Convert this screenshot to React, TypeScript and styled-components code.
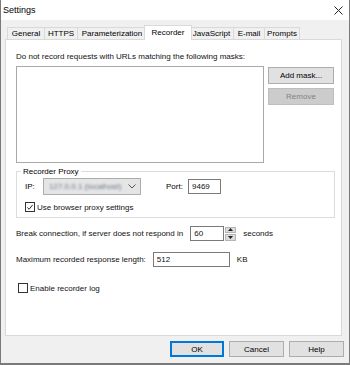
import React from 'react';
import styled, { createGlobalStyle } from 'styled-components';

const GlobalStyle = createGlobalStyle`
  html, body { margin: 0; padding: 0; background: #ffffff; }
  body {
    font-family: "Liberation Sans", Arial, sans-serif;
    font-size: 8px;
    color: #111;
  }
  * { box-sizing: border-box; }
`;

const tabs = [
    { label: 'General', width: 38 },
    { label: 'HTTPS', width: 34 },
    { label: 'Parameterization', width: 70 },
    { label: 'Recorder', width: 44, active: true },
    { label: 'JavaScript', width: 45 },
    { label: 'E-mail', width: 32 },
    { label: 'Prompts', width: 36 },
];

export default function App() {
    return (
        <>
            <GlobalStyle />
            <Window>
                <TitleBar>
                    <Title>Settings</Title>
                    <CloseIcon width="9" height="9" viewBox="0 0 9 9">
                        <path d="M0.5 0.5 L8.5 8.5 M8.5 0.5 L0.5 8.5" stroke="#222" strokeWidth="1" />
                    </CloseIcon>
                </TitleBar>
                <Body>
                    <TabStrip>
                        {tabs.map((t) => (
                            <Tab key={t.label} $width={t.width} $active={!!t.active}>
                                {t.label}
                            </Tab>
                        ))}
                    </TabStrip>
                    <Panel>
                        <Caption>Do not record requests with URLs matching the following masks:</Caption>
                        <ListRow>
                            <MaskList />
                            <SideButtons>
                                <PushButton $width={66}>Add mask...</PushButton>
                                <PushButton $width={66} disabled>Remove</PushButton>
                            </SideButtons>
                        </ListRow>

                        <ProxyGroup>
                            <Legend>Recorder Proxy</Legend>
                            <ProxyRow>
                                <FieldLabel $width={18}>IP:</FieldLabel>
                                <Combo>
                                    <BlurredValue>127.0.0.1 (localhost)</BlurredValue>
                                    <svg width="8" height="5" viewBox="0 0 8 5">
                                        <path d="M0.5 0.5 L4 4 L7.5 0.5" stroke="#555" strokeWidth="1" fill="none" />
                                    </svg>
                                </Combo>
                                <FieldLabel $width={22} $gap={25}>Port:</FieldLabel>
                                <TextInput $width={33} $height={15}>9469</TextInput>
                            </ProxyRow>
                            <CheckRow>
                                <CheckBox>
                                    <svg width="9" height="9" viewBox="0 0 9 9">
                                        <path d="M1.5 4.5 L3.5 6.5 L7.5 1.5" stroke="#222" strokeWidth="1.1" fill="none" />
                                    </svg>
                                </CheckBox>
                                <span>Use browser proxy settings</span>
                            </CheckRow>
                        </ProxyGroup>

                        <FormRow $top={8}>
                            <span>Break connection, if server does not respond in</span>
                            <SpinGroup>
                                <TextInput $width={34} $height={15}>60</TextInput>
                                <Spinner>
                                    <SpinHalf>
                                        <svg width="5" height="3" viewBox="0 0 5 3"><path d="M0 3 L2.5 0 L5 3 Z" fill="#222" /></svg>
                                    </SpinHalf>
                                    <SpinHalf>
                                        <svg width="5" height="3" viewBox="0 0 5 3"><path d="M0 0 L2.5 3 L5 0 Z" fill="#222" /></svg>
                                    </SpinHalf>
                                </Spinner>
                            </SpinGroup>
                            <span>seconds</span>
                        </FormRow>

                        <FormRow $top={11}>
                            <span>Maximum recorded response length:</span>
                            <TextInput $width={77} $height={15}>512</TextInput>
                            <span>KB</span>
                        </FormRow>

                        <CheckRow $top={15} $indent={2}>
                            <CheckBox />
                            <span>Enable recorder log</span>
                        </CheckRow>
                    </Panel>
                    <Footer>
                        <PushButton $width={54} $height={16} $default>OK</PushButton>
                        <PushButton $width={55} $height={16}>Cancel</PushButton>
                        <PushButton $width={55} $height={16}>Help</PushButton>
                    </Footer>
                </Body>
            </Window>
        </>
    );
}

// Styled Components
const Window = styled.div`
  width: 350px;
  height: 365px;
  display: flex;
  flex-direction: column;
  background: #f0f0f0;
  border: 1px solid #7a7a7a;
  border-top: none;
  border-bottom-width: 2px;
`;

const TitleBar = styled.div`
  height: 20px;
  flex-shrink: 0;
  background: #ffffff;
  display: flex;
  align-items: center;
  justify-content: space-between;
  padding: 0 6px 0 2px;
`;

const Title = styled.span`
  font-size: 9px;
  color: #000;
`;

const CloseIcon = styled.svg`
  display: block;
`;

const Body = styled.div`
  flex: 1;
  display: flex;
  flex-direction: column;
  padding: 5px 5px 0 4px;
`;

const TabStrip = styled.div`
  display: flex;
  align-items: flex-end;
  padding-left: 2px;
  position: relative;
  z-index: 1;
`;

const Tab = styled.div<{ $width: number; $active: boolean }>`
  width: ${(p) => (p.$active ? p.$width + 4 : p.$width)}px;
  height: ${(p) => (p.$active ? 15 : 12)}px;
  margin-left: ${(p) => (p.$active ? -3 : -1)}px;
  margin-right: ${(p) => (p.$active ? -2 : 0)}px;
  margin-bottom: ${(p) => (p.$active ? -1 : 0)}px;
  position: relative;
  z-index: ${(p) => (p.$active ? 2 : 1)};
  border: 1px solid #d9d9d9;
  border-bottom: none;
  background: ${(p) => (p.$active ? '#ffffff' : '#f0f0f0')};
  display: flex;
  align-items: center;
  justify-content: center;
  padding-bottom: ${(p) => (p.$active ? 2 : 0)}px;
  white-space: nowrap;
  color: #000;

  &:first-child {
    margin-left: 0;
  }
`;

const Panel = styled.div`
  flex: 1;
  margin-right: 2px;
  background: #ffffff;
  border: 1px solid #d9d9d9;
  padding: 11px 0 0 10px;
  display: flex;
  flex-direction: column;
  align-items: flex-start;
`;

const Caption = styled.div`
  line-height: 11px;
  height: 11px;
  white-space: nowrap;
`;

const ListRow = styled.div`
  display: flex;
  gap: 4px;
  margin-top: 4px;
  align-items: flex-start;
`;

const MaskList = styled.div`
  width: 248px;
  height: 97px;
  background: #ffffff;
  border: 1px solid #a9a9a9;
`;

const SideButtons = styled.div`
  display: flex;
  flex-direction: column;
  gap: 4px;
  padding-top: 1px;
`;

const PushButton = styled.button<{ $width: number; $height?: number; $default?: boolean }>`
  width: ${(p) => p.$width}px;
  height: ${(p) => p.$height ?? 17}px;
  padding: 0;
  font: inherit;
  font-size: 8px;
  color: #000;
  background: #e1e1e1;
  border: 1px solid ${(p) => (p.$default ? '#0078d7' : '#adadad')};
  box-shadow: ${(p) => (p.$default ? 'inset 0 0 0 1px #0078d7' : 'none')};

  &:disabled {
    background: #cccccc;
    border-color: #bfbfbf;
    color: #838383;
  }
`;

const ProxyGroup = styled.fieldset`
  width: 319px;
  margin: 3px 0 0 0;
  padding: 1px 0 4px 8px;
  border: 1px solid #dcdcdc;
  display: flex;
  flex-direction: column;
  min-width: 0;
`;

const Legend = styled.legend`
  padding: 0 2px;
  margin-left: -4px;
  line-height: 11px;
  color: #000;
`;

const ProxyRow = styled.div`
  display: flex;
  align-items: center;
  height: 17px;
`;

const FieldLabel = styled.span<{ $width: number; $gap?: number }>`
  width: ${(p) => p.$width}px;
  margin-left: ${(p) => p.$gap ?? 0}px;
  flex-shrink: 0;
  color: #000;
`;

const Combo = styled.div`
  width: 98px;
  height: 17px;
  background: #e5e5e5;
  border: 1px solid #adadad;
  display: flex;
  align-items: center;
  justify-content: space-between;
  padding: 0 4px 0 5px;
  overflow: hidden;
`;

const BlurredValue = styled.span`
  color: #6f7a8c;
  filter: blur(1.2px);
  white-space: nowrap;
`;

const TextInput = styled.div<{ $width: number; $height: number }>`
  width: ${(p) => p.$width}px;
  height: ${(p) => p.$height}px;
  border: 1px solid #7a7a7a;
  background: #ffffff;
  padding: 0 3px;
  display: flex;
  align-items: center;
  flex-shrink: 0;
`;

const CheckRow = styled.div<{ $top?: number; $indent?: number }>`
  display: flex;
  align-items: center;
  gap: 2px;
  height: 12px;
  margin-top: ${(p) => p.$top ?? 6}px;
  margin-left: ${(p) => p.$indent ?? 0}px;
  white-space: nowrap;
`;

const CheckBox = styled.div`
  width: 10px;
  height: 10px;
  border: 1px solid #333333;
  background: #ffffff;
  display: flex;
  align-items: center;
  justify-content: center;
  flex-shrink: 0;
`;

const FormRow = styled.div<{ $top: number }>`
  display: flex;
  align-items: center;
  gap: 7px;
  height: 15px;
  margin-top: ${(p) => p.$top}px;
  white-space: nowrap;
`;

const SpinGroup = styled.div`
  display: flex;
  align-items: center;
  gap: 1px;
`;

const Spinner = styled.div`
  width: 11px;
  height: 14px;
  display: flex;
  flex-direction: column;
  gap: 1px;
`;

const SpinHalf = styled.div`
  flex: 1;
  background: #dcdcdc;
  border: 1px solid #b5b5b5;
  display: flex;
  align-items: center;
  justify-content: center;
`;

const Footer = styled.div`
  height: 27px;
  flex-shrink: 0;
  display: flex;
  justify-content: flex-end;
  gap: 5px;
  padding: 5px 0 0 0;
`;
